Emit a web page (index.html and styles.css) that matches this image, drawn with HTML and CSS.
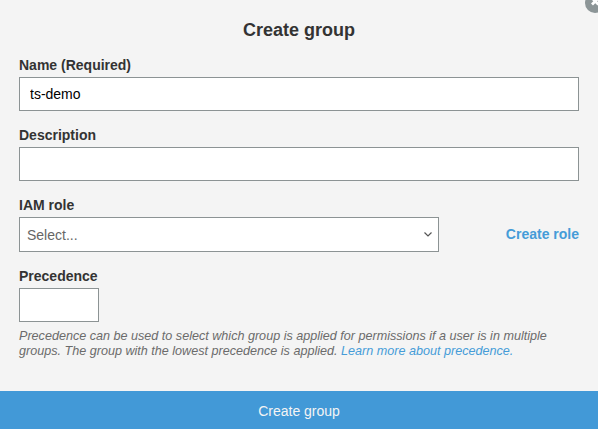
FILE: index.html
```html
<!DOCTYPE html>
<html lang="en">
<head>
<meta charset="utf-8">
<title>Create group</title>
<link rel="stylesheet" href="styles.css">
</head>
<body>
<main class="dialog">
  <button class="close" type="button" aria-label="Close"><svg width="20" height="20" viewBox="0 0 20 20"><circle cx="10" cy="10" r="10" fill="#8c9597"/><path d="M7 5l6.5 6.5M13.5 5l-6.5 6.5" stroke="#fff" stroke-width="2.8"/></svg></button>
  <h1 class="title">Create group</h1>
  <form class="form">
    <label class="label" for="name">Name (Required)</label>
    <input class="input" id="name" type="text" value="ts-demo">
    <label class="label" for="description">Description</label>
    <input class="input" id="description" type="text">
    <span class="label">IAM role</span>
    <div class="role-row">
      <div class="select"><span>Select...</span><svg class="chevron" width="8" height="5" viewBox="0 0 8 5"><path d="M.5 .5l3.5 3.5 3.5-3.5" fill="none" stroke="#555" stroke-width="1.2"/></svg></div>
      <a class="create-role" href="#">Create role</a>
    </div>
    <label class="label" for="precedence">Precedence</label>
    <input class="input input-small" id="precedence" type="text">
    <p class="hint">Precedence can be used to select which group is applied for permissions if a user is in multiple<br>groups. The group with the lowest precedence is applied. <a href="#">Learn more about precedence.</a></p>
  </form>
  <button class="submit" type="button">Create group</button>
</main>
</body>
</html>
```
FILE: styles.css
```css
* { box-sizing: border-box; }
body { margin: 0; overflow: hidden; font-family: "Liberation Sans", Arial, sans-serif; }
.dialog { position: relative; display: flex; flex-direction: column; height: 429px; background: #f4f4f4; color: #333; }
.close { position: absolute; top: -7px; right: -7px; width: 20px; height: 20px; padding: 0; border: 0; background: none; }
.close svg { display: block; }
.title { margin: 19px 0 0; font-size: 18px; line-height: 22px; text-align: center; }
.form { display: flex; flex-direction: column; padding: 16px 19px 0; }
.label { margin-bottom: 4px; font-size: 14px; line-height: 16px; font-weight: bold; }
.input { width: 100%; height: 34px; margin: 0 0 16px; padding: 0 10px; border: 1px solid #8c9394; border-radius: 0; background: #fff; color: #000; font: 14px "Liberation Sans", Arial, sans-serif; }
.role-row { display: flex; align-items: center; justify-content: space-between; margin-bottom: 16px; }
.select { display: flex; align-items: center; justify-content: space-between; width: 420px; height: 35px; padding: 1px 6px 0 7px; border: 1px solid #8c9394; background: #fff; color: #666; font-size: 14px; }
.chevron { margin-bottom: 2px; }
.create-role { padding-bottom: 2px; color: #459cd8; font-size: 14px; font-weight: bold; text-decoration: none; }
.input-small { width: 80px; margin-bottom: 7px; }
.hint { margin: 0; color: #6b6b6b; font-size: 12.6px; font-style: italic; line-height: 15px; }
.hint a { color: #459cd8; text-decoration: none; }
.submit { height: 38px; margin-top: auto; padding: 2px 0 0; border: 0; background: #4299d7; color: #f4f4f4; font: 14px "Liberation Sans", Arial, sans-serif; }
```
